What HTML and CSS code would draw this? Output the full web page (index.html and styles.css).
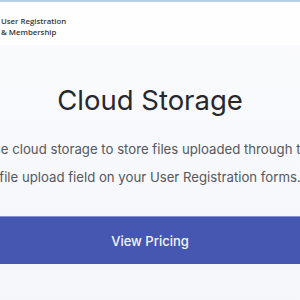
FILE: index.html
```html
<!DOCTYPE html>
<html>
<head>
<meta charset="utf-8">
<link rel="stylesheet" href="styles.css">
</head>
<body>
<header class="topbar">
  <div class="brand">User Registration<br>&amp; Membership</div>
</header>
<main class="content">
  <h1 class="title">Cloud Storage</h1>
  <p class="desc">Use cloud storage to store files uploaded through the<br>file upload field on your User Registration forms.</p>
  <a class="btn">View Pricing</a>
</main>
</body>
</html>
```
FILE: styles.css
```css
html, body {
  margin: 0;
  padding: 0;
  width: 300px;
  height: 300px;
  overflow: hidden;
}
body {
  background: linear-gradient(#fbfbfd, #f4f6fa);
  font-family: "Inter", "Open Sans", sans-serif;
}
.topbar {
  height: 43px;
  border-top: 2px solid #b9d0e2;
  background: #fefefe;
  display: flex;
  align-items: center;
}
.brand {
  font-family: "Open Sans", sans-serif;
  font-size: 7.8px;
  line-height: 10.5px;
  font-weight: 600;
  color: #33363d;
  padding-left: 1px;
  padding-top: 6px;
}
.content {
  display: flex;
  flex-direction: column;
  align-items: center;
}
.title {
  margin: 38px 0 0;
  font-size: 27.5px;
  line-height: 34px;
  font-weight: 400;
  color: #27282d;
}
.desc {
  margin: 18px -100px 0;
  width: 500px;
  text-align: center;
  font-size: 13.2px;
  line-height: 28px;
  color: #55575d;
  white-space: nowrap;
}
.btn {
  margin-top: 25px;
  align-self: stretch;
  height: 47px;
  display: flex;
  align-items: center;
  justify-content: center;
  background: #4557b0;
  border-top: 1px solid #8794cf;
  color: #f3f4fb;
  font-size: 13px;
  font-weight: 500;
}
```
